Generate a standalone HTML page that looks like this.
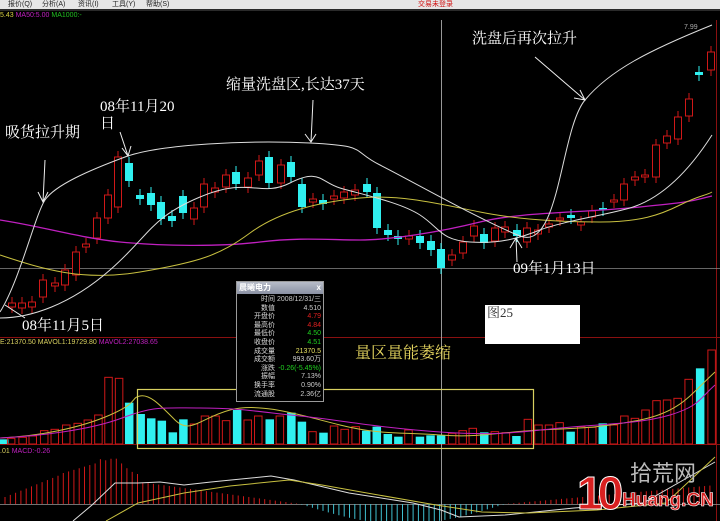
<!DOCTYPE html>
<html><head><meta charset="utf-8">
<style>
html,body{margin:0;padding:0;background:#000;width:720px;height:521px;overflow:hidden;font-family:"Liberation Sans","Noto Sans CJK SC",sans-serif}
#wrap{position:relative;width:720px;height:521px}
svg{position:absolute;left:0;top:0}
.menu{position:absolute;left:0;top:0;width:720px;height:9px;background:#e6e6e6;font-size:7px;line-height:9px;color:#222}
.menu span{position:absolute;top:0}
.ann{position:absolute;color:#fff;font-family:"Liberation Serif","Noto Serif CJK SC",serif;font-size:15px;line-height:17px;white-space:nowrap}
.pop{position:absolute;left:236px;top:281px;width:86px;height:119px;background:#000;border:1px solid #9a9a9a;font-size:7px;color:#ccc;overflow:hidden}
.pop .t{height:12px;background:linear-gradient(#b7bcc8,#8a91a3);color:#fff;font-size:8px;line-height:12px;padding-left:2px;font-weight:bold;margin-bottom:2px}
.pop .r{position:relative;height:8.6px;line-height:8.6px}
.pop .r b{position:absolute;left:2px;width:36px;text-align:right;font-weight:normal;color:#ddd}
.pop .r i{position:absolute;right:2px;font-style:normal}
</style></head><body><div id="wrap">
<svg id="s" width="720" height="521" xmlns="http://www.w3.org/2000/svg">
<rect width="720" height="521" fill="#000"/>
<line x1="0" y1="10" x2="720" y2="10" fill="none" stroke="#555"/>
<line x1="0" y1="337.5" x2="720" y2="337.5" stroke="#8a1010"/>
<line x1="0" y1="444.5" x2="720" y2="444.5" stroke="#8a1010"/>
<line x1="716.5" y1="20" x2="716.5" y2="521" stroke="#8a1010"/>
<line x1="0" y1="268.5" x2="720" y2="268.5" stroke="#888" stroke-width="0.8"/>
<line x1="0" y1="504.5" x2="720" y2="504.5" stroke="#999" stroke-width="0.8"/>
<line x1="441.5" y1="20" x2="441.5" y2="521" stroke="#aaa" stroke-width="0.9"/>
<g id="cd"></g><g id="vb"></g><g id="mh"></g>
<path d="M0,220 C40,226 80,238 120,242 S220,247 260,242 S330,240 360,240 S440,232 480,222 S580,213 640,207 S690,201 712,196" fill="none" stroke="#c020c0" stroke-width="1.3"/>
<path d="M0,255 C40,268 80,282 140,272 S220,255 250,233 S320,202 360,198 S440,204 480,212 S560,222 600,222 S660,215 680,205 S705,196 712,192" fill="none" stroke="#c8c040" stroke-width="1"/>
<path d="M0,318 C30,318 70,305 110,270 S150,218 200,197 S260,198 290,183 S320,182 340,188 S400,202 420,215 S440,240 470,242 S520,238 540,230 S610,214 630,208 S680,185 712,135" fill="none" stroke="#ddd" stroke-width="1"/>
<path d="M0,312 C20,280 35,215 45,200 S90,170 125,157 S250,140 310,143 S350,150 380,165 S480,220 520,236 S560,130 585,100 S650,50 712,25" fill="none" stroke="#ddd" stroke-width="1"/>
<g stroke="#eee" stroke-width="1" fill="none">
<path d="M45,160 L43,202 M38,192 L43,202 L48,192"/>
<path d="M120,132 L128,156 M122,148 L128,156 L131,146"/>
<path d="M313,100 L311,142 M305,134 L311,142 L316,134"/>
<path d="M535,57 L585,100 M574,98 L585,100 L580,90"/>
<path d="M517,262 L516,238 M510,248 L516,238 L522,248"/>
<path d="M25,318 L5,305"/>
</g>
<path d="M0,438 C40,436 80,428 110,415 S130,398 140,396 S160,405 175,420 S200,418 230,410 S300,415 340,425 S400,432 440,435 S500,432 540,430 S600,428 640,420 S690,395 715,372" fill="none" stroke="#c8c040" stroke-width="1"/>
<path d="M0,438 C40,436 90,430 122,418 S160,408 200,408 S260,412 300,416 S380,428 440,432 S520,432 560,428 S640,424 670,415 S700,398 715,385" fill="none" stroke="#c020c0" stroke-width="1"/>
<rect x="137.5" y="389.5" width="396" height="59" fill="none" stroke="#d8d060" stroke-width="1.2"/>
<path d="M73,521 L92,505 L115,483 L138,483 L160,482 L184,485 L211,482 L271,476 L294,480 L349,493 L413,503 L441,510 L459,517 L505,515 L574,508 L643,503 L715,462" fill="none" stroke="#ddd" stroke-width="1"/>
<path d="M106,521 L138,503 L184,493 L230,486 L289,480 L322,485 L367,493 L436,505 L482,512 L528,513 L597,510 L666,503 L715,457" fill="none" stroke="#c8c040" stroke-width="1"/>
</svg>
<div class="menu"><span style="left:8px">报价(Q)</span><span style="left:42px">分析(A)</span><span style="left:78px">资讯(I)</span><span style="left:112px">工具(Y)</span><span style="left:146px">帮助(S)</span><span style="left:418px;color:#d01010">交易未登录</span></div>
<div style="position:absolute;left:0;top:11px;font-size:7px;line-height:9px;white-space:nowrap"><span style="color:#d8d040">5.43</span> <span style="color:#c020c0">MA50:5.00</span> <span style="color:#20c020">MA1000:-</span></div>
<div style="position:absolute;left:684px;top:24px;font-size:7px;color:#aaa">7.99</div>
<div style="position:absolute;left:0;top:338px;font-size:7px;line-height:9px;white-space:nowrap"><span style="color:#d8d060">E:21370.50 MAVOL1:19729.80</span> <span style="color:#c020c0">MAVOL2:27038.65</span></div>
<div style="position:absolute;left:0;top:447px;font-size:7px;line-height:9px;white-space:nowrap"><span style="color:#d8d060">.01</span> <span style="color:#c020c0">MACD:-0.26</span></div>
<div class="ann" style="left:5px;top:125px">吸货拉升期</div>
<div class="ann" style="left:100px;top:99px">08年11月20<br>日</div>
<div class="ann" style="left:226px;top:77px">缩量洗盘区,长达37天</div>
<div class="ann" style="left:472px;top:31px">洗盘后再次拉升</div>
<div class="ann" style="left:513px;top:261px">09年1月13日</div>
<div class="ann" style="left:22px;top:318px">08年11月5日</div>
<div style="position:absolute;left:485px;top:305px;width:95px;height:39px;background:#fff;color:#333;font-family:'Liberation Serif','Noto Serif CJK SC',serif;font-size:13px;line-height:16px;padding-left:2px;box-sizing:border-box">图25</div>
<div class="ann" style="left:355px;top:345px;color:#e8d860;font-size:16px">量区量能萎缩</div>
<div class="pop"><div class="t">晨曦电力 <span style="float:right;margin-right:2px">x</span></div>
<div class="r"><b>时间</b><i>2008/12/31/三</i></div>
<div class="r"><b>数值</b><i>4.510</i></div>
<div class="r"><b>开盘价</b><i style="color:#e02020">4.79</i></div>
<div class="r"><b>最高价</b><i style="color:#e02020">4.84</i></div>
<div class="r"><b>最低价</b><i style="color:#20d020">4.50</i></div>
<div class="r"><b>收盘价</b><i style="color:#20d020">4.51</i></div>
<div class="r"><b>成交量</b><i style="color:#e8e060">21370.5</i></div>
<div class="r"><b>成交额</b><i>993.60万</i></div>
<div class="r"><b>涨跌</b><i style="color:#20d020">-0.26(-5.45%)</i></div>
<div class="r"><b>振幅</b><i>7.13%</i></div>
<div class="r"><b>换手率</b><i>0.90%</i></div>
<div class="r"><b>流通股</b><i>2.36亿</i></div>
</div>
<div style="position:absolute;left:577px;top:468px;font-size:46px;line-height:50px;font-weight:bold;color:#d82020;letter-spacing:-5px;font-family:'Liberation Sans',sans-serif;-webkit-text-stroke:1px #fff">10</div>
<div style="position:absolute;left:630px;top:460px;font-size:22px;line-height:28px;color:#bbb;font-family:'Liberation Sans','Noto Sans CJK SC',sans-serif">拾荒网</div>
<div style="position:absolute;left:622px;top:490px;font-size:19px;line-height:22px;font-weight:bold;color:#d82020;-webkit-text-stroke:0.6px #fff;font-family:'Liberation Sans',sans-serif">Huang.CN</div>
</div>
<script>
var NS="http://www.w3.org/2000/svg";
function el(g,t,a){var e=document.createElementNS(NS,t);for(var k in a)e.setAttribute(k,a[k]);document.getElementById(g).appendChild(e);}
var R="#d01818",C="#30f0f0";
var c=[[12,303,307,'r'],[22,303,308,'r'],[32,302,307,'r'],[43,280,297,'r'],[55,283,286,'r'],[65,270,285,'r'],[76,252,275,'r'],[86,244,247,'r'],[97,218,238,'r'],[108,195,218,'r'],[118,157,207,'r'],[129,163,181,'c'],[140,195,199,'c'],[151,193,205,'c'],[161,202,219,'c'],[172,216,221,'c'],[183,196,213,'c'],[194,208,219,'r'],[204,184,207,'r'],[215,188,192,'r'],[226,175,187,'r'],[236,172,184,'c'],[248,178,187,'r'],[259,161,175,'r'],[269,157,183,'c'],[281,165,183,'r'],[291,162,177,'c'],[302,184,207,'c'],[313,199,202,'r'],[323,200,204,'c'],[334,196,199,'r'],[344,192,198,'r'],[355,190,195,'r'],[367,184,192,'c'],[377,193,228,'c'],[388,230,235,'c'],[398,236,239,'c'],[409,236,239,'r'],[420,236,243,'c'],[431,241,250,'c'],[441,249,268,'c'],[452,255,260,'r'],[463,242,253,'r'],[474,226,236,'r'],[484,234,243,'c'],[495,228,241,'r'],[505,227,232,'r'],[517,230,236,'c'],[527,228,242,'r'],[538,230,234,'r'],[549,224,227,'r'],[560,218,220,'r'],[571,215,218,'c'],[581,222,225,'r'],[592,211,217,'r'],[603,208,210,'c'],[614,200,202,'r'],[624,184,200,'r'],[635,177,180,'r'],[645,175,177,'r'],[656,145,177,'r'],[667,136,143,'r'],[678,117,139,'r'],[689,99,116,'r'],[699,72,75,'c'],[711,52,70,'r']];
c.forEach(function(d){var col=d[3]=='r'?R:C;
el('cd','line',{x1:d[0],x2:d[0],y1:d[1]-6,y2:d[2]+6,stroke:col,'stroke-width':1});
if(d[3]=='r')el('cd','rect',{x:d[0]-3.5,y:d[1],width:7,height:Math.max(d[2]-d[1],1),fill:'#000',stroke:col,'stroke-width':1});
else el('cd','rect',{x:d[0]-4,y:d[1],width:8,height:Math.max(d[2]-d[1],1.5),fill:col});});
var v=[[0,328,'c'],[15,325,'r'],[40,322,'r'],[62,318,'r'],[87,302,'r'],[110,298,'r'],[135,285,'r'],[160,280,'r'],[182,270,'r'],[205,255,'r'],[227,142,'r'],[250,145,'r'],[272,218,'c'],[297,252,'c'],[320,265,'c'],[343,272,'c'],[367,307,'c'],[390,268,'c'],[413,282,'r'],[437,258,'r'],[460,258,'r'],[483,272,'r'],[507,240,'c'],[530,270,'r'],[553,258,'r'],[578,268,'c'],[600,258,'r'],[625,248,'c'],[648,275,'c'],[671,305,'r'],[695,308,'c'],[718,288,'r'],[741,298,'r'],[765,290,'r'],[788,302,'c'],[811,290,'c'],[835,312,'c'],[858,320,'c'],[880,300,'r'],[905,320,'c'],[928,316,'c'],[951,316,'c'],[975,310,'r'],[998,302,'r'],[1020,295,'r'],[1045,307,'c'],[1068,305,'r'],[1092,308,'r'],[1115,318,'c'],[1140,268,'r'],[1163,285,'r'],[1186,285,'r'],[1209,278,'r'],[1233,305,'c'],[1256,290,'r'],[1280,292,'r'],[1303,280,'c'],[1327,285,'r'],[1350,258,'r'],[1373,265,'r'],[1396,240,'r'],[1420,212,'r'],[1443,210,'r'],[1466,205,'r'],[1490,148,'r'],[1515,115,'c'],[1540,60,'r']];
v.forEach(function(d){var x=d[0]/2.177,t=330+d[1]/3;
if(d[2]=='r')el('vb','rect',{x:x+0.5,y:t,width:7.5,height:444-t,fill:'none',stroke:R,'stroke-width':1});
else el('vb','rect',{x:x,y:t,width:8.5,height:444-t,fill:C});});
for(var x=5;x<715;x+=5.3){var h;
if(x<60)h=5+x*0.4;else if(x<140)h=30+(x-60)*0.3-(x>115?(x-115)*1.2:0);else if(x<300)h=Math.max(0,22*(300-x)/160);else if(x<505)h=-Math.min(18,Math.sin((x-300)/205*Math.PI)*20);else h=(x-505)*0.09;
if(x>100&&x<140)h=Math.max(h,45-(x-100)*0.4);
if(h>0)el('mh','line',{x1:x,x2:x,y1:504,y2:504-h,stroke:R,'stroke-width':1});
else if(h<0)el('mh','line',{x1:x,x2:x,y1:504,y2:504-h,stroke:'#40c0d0','stroke-width':1});}
</script>
</body></html>
